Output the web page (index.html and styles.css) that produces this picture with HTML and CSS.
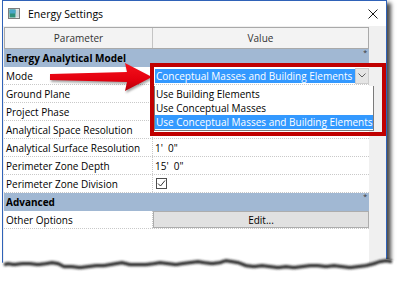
FILE: index.html
```
<html>
<head>
<meta charset="UTF-8">
<meta name="viewport" content="width=device-width, initial-scale=1.0">
<link rel="stylesheet" href="styles.css">
</head>
<body>
<div class="window">
    <div class="titlebar">
        <svg class="app_icon" width="12" height="11" viewBox="0 0 12 11">
            <rect x="0.5" y="0.5" width="11" height="10" fill="#e8e8e8" stroke="#7d7d7d"/>
            <rect x="1.5" y="1.5" width="6" height="8" fill="#2e8f7a"/>
            <rect x="1.5" y="1.5" width="6" height="4" fill="#4aa6c8"/>
            <rect x="8" y="2" width="3" height="7" fill="#cfd8dc"/>
        </svg>
        <span class="title">Energy Settings</span>
        <svg class="close" width="10" height="10" viewBox="0 0 10 10">
            <path d="M0.5 0.5 L9.5 9.5 M9.5 0.5 L0.5 9.5" stroke="#1a1a1a" stroke-width="1"/>
        </svg>
    </div>
    <div class="client">
        <div class="grid">
            <div class="head">
                <div class="c1">Parameter</div>
                <div class="c2">Value</div>
            </div>
            <div class="group">Energy Analytical Model<span class="mark">*</span></div>
            <div class="row">
                <div class="c1">Mode</div>
                <div class="c2 combo">
                    <span class="sel">Conceptual Masses and Building Elements</span>
                    <span class="drop">
                        <svg width="8" height="5" viewBox="0 0 8 5"><path d="M0.5 0.5 L4 4 L7.5 0.5" fill="none" stroke="#606060"/></svg>
                    </span>
                </div>
            </div>
            <div class="row"><div class="c1">Ground Plane</div><div class="c2"></div></div>
            <div class="row"><div class="c1">Project Phase</div><div class="c2"></div></div>
            <div class="row"><div class="c1">Analytical Space Resolution</div><div class="c2"></div></div>
            <div class="row"><div class="c1">Analytical Surface Resolution</div><div class="c2">1'&nbsp;&nbsp;0"</div></div>
            <div class="row"><div class="c1">Perimeter Zone Depth</div><div class="c2">15'&nbsp;&nbsp;0"</div></div>
            <div class="row">
                <div class="c1">Perimeter Zone Division</div>
                <div class="c2">
                    <svg class="check" width="11" height="11" viewBox="0 0 11 11">
                        <rect x="0.5" y="0.5" width="10" height="10" fill="#fff" stroke="#4d4d4d"/>
                        <path d="M2 5.5 L4.5 8 L9 2.5" fill="none" stroke="#333" stroke-width="1"/>
                    </svg>
                </div>
            </div>
            <div class="group">Advanced<span class="mark">*</span></div>
            <div class="row">
                <div class="c1">Other Options</div>
                <div class="c2 btn">Edit...</div>
            </div>

            <!-- dropdown list -->
            <div class="popup">
                <div class="item">Use Building Elements</div>
                <div class="item">Use Conceptual Masses</div>
                <div class="item on">Use Conceptual Masses and Building Elements</div>
            </div>
        </div>
    </div>
</div>

<!-- annotation -->
<svg class="arrow" width="112" height="40" viewBox="0 0 112 40">
    <defs>
        <linearGradient id="ag" x1="0" y1="0" x2="0" y2="1">
            <stop offset="0" stop-color="#f5121c"/>
            <stop offset="0.6" stop-color="#e3000f"/>
            <stop offset="1" stop-color="#b3000a"/>
        </linearGradient>
    </defs>
    <polygon points="5,16 82,14 80,5 107,19 80,33 82,24 5,22" fill="url(#ag)"/>
</svg>
<div class="callout"></div>

<svg class="torn" width="400" height="31" viewBox="0 0 400 31">
    <defs>
        <filter id="blur" x="-5%" y="-50%" width="110%" height="200%">
            <feGaussianBlur stdDeviation="1"/>
        </filter>
    </defs>
    <path d="M0,13 L8,12 14,13 22,12 30,12 38,13 46,12 52,11 58,12 64,15 72,15 80,16 88,15 96,14 104,14 110,13 116,12 122,11 130,13 138,13 146,13 154,12 160,11 168,12 176,13 182,12 190,11 198,10 204,11 212,12 220,11 226,9 232,10 238,11 246,14 254,15 262,14 270,15 278,16 286,15 294,16 302,15 310,14 318,14 326,15 334,14 342,15 350,16 358,15 366,14 374,12 380,10 386,9 392,10 400,12 L400,31 L0,31 Z" fill="#fff"/>
    <path d="M4,13 L8,12 14,13 22,12 30,12 38,13 46,12 52,11 58,12 64,15 72,15 80,16 88,15 96,14 104,14 110,13 116,12 122,11 130,13 138,13 146,13 154,12 160,11 168,12 176,13 182,12 190,11 198,10 204,11 212,12 220,11 226,9 232,10 238,11 246,14 254,15 262,14 270,15 278,16 286,15 294,16 302,15 310,14 318,14 326,15 334,14 342,15 350,16 358,15 366,14 374,12 380,10 386,9 392,10" fill="none" stroke="#262626" stroke-width="3.2" transform="translate(0,1.6)" filter="url(#blur)"/>
</svg>
</body>
</html>
```
FILE: styles.css
```
* { margin: 0; padding: 0; box-sizing: border-box; }
body { width: 400px; height: 281px; overflow: hidden; background: #fff; font-family: "Open Sans", "Noto Sans", sans-serif; font-size: 10px; color: #000; position: relative; }

.window { margin-left: 2px; width: 385px; height: 272px; border: 1px solid #2f62b8; border-bottom: none; background: #f0f0f0; box-shadow: 4px 3px 4px rgba(0,0,0,.7); display: flex; flex-direction: column; }
.titlebar { height: 25px; background: #fff; display: flex; align-items: center; padding: 0 8px 0 5px; }
.titlebar .app_icon { margin-right: 8px; }
.titlebar .title { font-size: 10.5px; flex: 1; }

.client { flex: 1; padding: 1px 17px 0 1px; display: flex; }
.grid { flex: 1; background: #fff; position: relative; }

.head { display: flex; height: 22px; border: 1px solid #a9a9a9; background: #f3f3f3; color: #333; }
.head > div { display: flex; align-items: center; justify-content: center; }
.head .c1 { width: 148px; border-right: 1px solid #c4c4c4; }
.head .c2 { flex: 1; }

.group { height: 18px; background: #a1b8d3; font-weight: bold; display: flex; align-items: center; padding-left: 2px; position: relative; }
.group .mark { position: absolute; right: 2px; top: -1px; font-size: 7px; font-weight: normal; color: #333; }

.row { display: flex; height: 18px; border-bottom: 1px dotted #c9c9c9; }
.row > div { display: flex; align-items: center; padding-left: 2px; }
.row .c1 { width: 149px; border-right: 1px dotted #c9c9c9; }
.row .c2 { flex: 1; }

.combo { padding: 1px 0 1px 2px; }
.combo .sel { flex: 1; height: 14px; background: #3399ff; color: #fff; display: flex; align-items: center; padding-left: 1px; }
.combo .drop { width: 14px; height: 16px; background: #e5e5e5; border: 1px solid #cdcdcd; display: flex; align-items: center; justify-content: center; }

.check { margin-left: 1px; }

.row .btn { justify-content: center; background: #e1e1e1; border: 1px solid #adadad; padding-left: 0; }

.popup { position: absolute; left: 150px; top: 59px; width: 220px; height: 45px; background: #fff; border: 1px solid #7a7a7a; border-top: none; padding-top: 1px; }
.popup .item { height: 14px; display: flex; align-items: center; padding-left: 1px; }
.popup .item.on { background: #3399ff; color: #fff; }

.arrow { position: absolute; left: 45px; top: 58px; filter: drop-shadow(1px 2px 1px rgba(0,0,0,.35)); }
.callout { position: absolute; left: 150px; top: 63px; width: 236px; height: 73px; border: 4px solid #c00000; }
.torn { position: absolute; left: 0; top: 250px; }
```
